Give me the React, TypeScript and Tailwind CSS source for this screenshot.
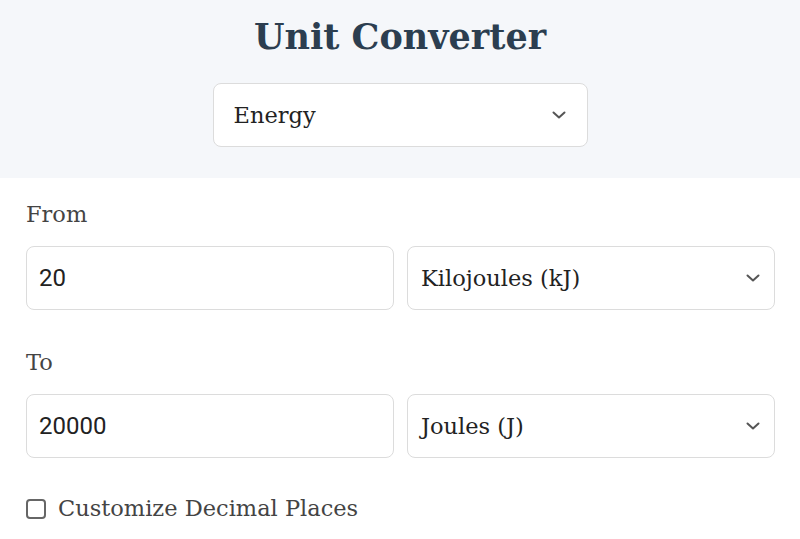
import React from "react";

const Chevron = () => (
  <svg width="14" height="8" viewBox="0 0 14 8" fill="none" stroke="#555" strokeWidth="2" strokeLinecap="round" strokeLinejoin="round">
    <path d="M1.5 1.5L7 6.5L12.5 1.5" />
  </svg>
);

const SelectBox = ({ label, className = "" }: { label: string; className?: string }) => (
  <div className={`flex items-center justify-between bg-white border border-[#dcdcdc] rounded-[8px] h-[64px] pl-[13px] pr-[14px] ${className}`}>
    <span className="text-[22.5px] text-[#222] pt-[2px]">{label}</span>
    <Chevron />
  </div>
);

const InputBox = ({ value }: { value: string }) => (
  <div className="flex items-center bg-white border border-[#dcdcdc] rounded-[8px] h-[64px] pl-[12px]">
    <span className="text-[24px] text-[#222]" style={{ fontFamily: 'Roboto, sans-serif' }}>{value}</span>
  </div>
);

export default function App() {
  return (
    <div className="w-[800px] h-[539px] bg-white overflow-hidden" style={{ fontFamily: '"DejaVu Serif", serif' }}>
      <div className="bg-[#f5f7fa] h-[178px] flex flex-col items-center pt-[12px]">
        <h1 className="text-[35px] font-bold text-[#2c3e50] leading-[50px]">Unit Converter</h1>
        <SelectBox label="Energy" className="w-[375px] mt-[21px] pl-[20px] pr-[21px]" />
      </div>
      <div className="pl-[26px] pr-[25px] pt-[22px]">
        <div className="text-[22.5px] text-[#444] leading-[28px]">From</div>
        <div className="grid grid-cols-2 gap-[13px] mt-[18px]">
          <InputBox value="20" />
          <SelectBox label="Kilojoules (kJ)" />
        </div>
        <div className="text-[22.5px] text-[#444] leading-[28px] mt-[38px]">To</div>
        <div className="grid grid-cols-2 gap-[13px] mt-[18px]">
          <InputBox value="20000" />
          <SelectBox label="Joules (J)" />
        </div>
        <label className="flex items-center gap-[12px] mt-[34px]">
          <span className="w-[20px] h-[20px] border-2 border-[#666] rounded-[4px] bg-white" />
          <span className="text-[22.5px] text-[#444]">Customize Decimal Places</span>
        </label>
      </div>
    </div>
  );
}
